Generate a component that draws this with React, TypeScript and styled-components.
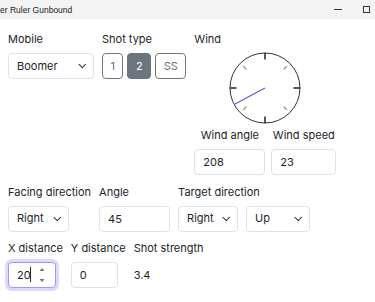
import React from "react";
import styled, { createGlobalStyle } from "styled-components";

const GlobalStyle = createGlobalStyle`
  html, body {
    margin: 0;
    padding: 0;
    background: #fff;
  }
  body {
    font-family: Inter, "Noto Sans", sans-serif;
    font-size: 11px;
    line-height: 16.5px;
    color: #212529;
  }
  * {
    box-sizing: border-box;
  }
`;

const Window = styled.div`
  width: 375px;
  height: 302px;
  overflow: hidden;
  background: #fff;
`;

const TitleBar = styled.div`
  height: 19px;
  background: #f3f3f3;
  display: flex;
  align-items: center;
`;

const Title = styled.span`
  flex: 1;
  font-family: "Liberation Sans", Arial, sans-serif;
  font-size: 8.5px;
  color: #1b1b1b;
  white-space: nowrap;
  padding-top: 1px;
`;

const WinControls = styled.div`
  display: flex;
  margin-right: -6px;
`;

const WinButton = styled.div`
  width: 29px;
  height: 19px;
  display: flex;
  align-items: center;
  justify-content: center;
`;

const MinGlyph = styled.span`
  width: 8px;
  height: 1px;
  background: #333;
`;

const MaxGlyph = styled.span`
  width: 7px;
  height: 7px;
  border: 1px solid #333;
`;

const Content = styled.div`
  padding: 12px 8px 0;
  display: flex;
  flex-direction: column;
  gap: 8.5px;
`;

const Row = styled.div`
  display: flex;
  align-items: flex-start;
  gap: ${(p: { $gap?: number }) => p.$gap ?? 8}px;
`;

const Field = styled.div<{ $center?: boolean }>`
  display: flex;
  flex-direction: column;
  align-items: ${(p) => (p.$center ? "center" : "flex-start")};
`;

const Label = styled.label`
  margin-bottom: 5.5px;
  white-space: nowrap;
`;

const SelectWrap = styled.div<{ $w: number }>`
  position: relative;
  width: ${(p) => p.$w}px;
  height: 26px;
`;

const NativeSelect = styled.select`
  appearance: none;
  width: 100%;
  height: 100%;
  padding: 0 22px 0 8px;
  border: 1px solid #dee2e6;
  border-radius: 4px;
  background: #fff;
  font: inherit;
  color: #212529;
  outline: none;
`;

const Chevron = styled.svg`
  position: absolute;
  right: 8px;
  top: 50%;
  transform: translateY(-50%);
  pointer-events: none;
`;

const InputWrap = styled.div`
  position: relative;
`;

const TextInput = styled.input<{ $w: number; $focused?: boolean }>`
  width: ${(p) => p.$w}px;
  height: 26px;
  padding: 0 8px;
  border: 1px solid ${(p) => (p.$focused ? "#9c9af4" : "#dee2e6")};
  border-radius: 4px;
  box-shadow: ${(p) => (p.$focused ? "0 0 0 3px rgba(112, 104, 246, 0.25)" : "none")};
  font: inherit;
  color: #212529;
  background: #fff;
  outline: none;
  caret-color: #212529;
`;

const Spinner = styled.svg`
  position: absolute;
  right: 11px;
  top: 5px;
  pointer-events: none;
`;

const Caret = styled.span`
  position: absolute;
  left: 22px;
  top: 5px;
  width: 1px;
  height: 15px;
  background: #212529;
`;

const ButtonGroup = styled.div`
  display: flex;
  gap: 4px;
`;

const ShotButton = styled.button<{ $active?: boolean }>`
  height: 26px;
  padding: 0 7.5px;
  border: 1px solid #6c757d;
  border-radius: 4px;
  background: ${(p) => (p.$active ? "#6c757d" : "#fff")};
  color: ${(p) => (p.$active ? "#fff" : "#6c757d")};
  font: inherit;
  cursor: pointer;
`;

const WindField = styled.div`
  display: flex;
  flex-direction: column;
  width: 142px;
`;

const DialBox = styled.div`
  display: flex;
  justify-content: center;
  margin-top: -1px;
  margin-bottom: 3px;
`;

const Value = styled.div`
  height: 26px;
  line-height: 26px;
`;

function Select({ value, options, width }: { value: string; options: string[]; width: number }) {
  return (
    <SelectWrap $w={width}>
      <NativeSelect defaultValue={value}>
        {options.map((o) => (
          <option key={o}>{o}</option>
        ))}
      </NativeSelect>
      <Chevron width="8.5" height="8.5" viewBox="0 0 16 16">
        <path d="m2 5 6 6 6-6" fill="none" stroke="#343a40" strokeWidth="2" strokeLinecap="round" strokeLinejoin="round" />
      </Chevron>
    </SelectWrap>
  );
}

function WindDial({ angle }: { angle: number }) {
  const c = 36;
  const r = 35;
  const rad = (angle * Math.PI) / 180;
  const ticks = [0, 45, 90, 135, 180, 225, 270, 315];
  return (
    <svg width="72" height="72" viewBox="0 0 72 72">
      <circle cx={c} cy={c} r={r} fill="none" stroke="#333" strokeWidth="1" />
      {ticks.map((t) => {
        const a = (t * Math.PI) / 180;
        const major = t % 90 === 0;
        const r1 = major ? 28.5 : 26.5;
        const r2 = major ? 35 : 31;
        return (
          <line
            key={t}
            x1={c + r1 * Math.cos(a)}
            y1={c - r1 * Math.sin(a)}
            x2={c + r2 * Math.cos(a)}
            y2={c - r2 * Math.sin(a)}
            stroke={major ? "#111" : "#8a8a8a"}
            strokeWidth={major ? 1.4 : 1.1}
          />
        );
      })}
      <line
        x1={c}
        y1={c}
        x2={c + 34 * Math.cos(rad)}
        y2={c - 34 * Math.sin(rad)}
        stroke="#6a5acd"
        strokeWidth="1.2"
      />
    </svg>
  );
}

export default function App() {
  const windAngle = 208;
  return (
    <Window>
      <GlobalStyle />
      <TitleBar>
        <Title>er Ruler Gunbound</Title>
        <WinControls>
          <WinButton>
            <MinGlyph />
          </WinButton>
          <WinButton>
            <MaxGlyph />
          </WinButton>
        </WinControls>
      </TitleBar>
      <Content>
        <Row>
          <Field>
            <Label>Mobile</Label>
            <Select value="Boomer" options={["Boomer", "Armor", "Mage", "Nak", "Trico"]} width={86} />
          </Field>
          <Field>
            <Label>Shot type</Label>
            <ButtonGroup>
              <ShotButton>1</ShotButton>
              <ShotButton $active>2</ShotButton>
              <ShotButton>SS</ShotButton>
            </ButtonGroup>
          </Field>
          <WindField>
            <Label>Wind</Label>
            <DialBox>
              <WindDial angle={windAngle} />
            </DialBox>
            <Row $gap={6}>
              <Field $center>
                <Label>Wind angle</Label>
                <TextInput $w={71} defaultValue={String(windAngle)} />
              </Field>
              <Field $center>
                <Label>Wind speed</Label>
                <TextInput $w={65} defaultValue="23" />
              </Field>
            </Row>
          </WindField>
        </Row>
        <Row>
          <Field>
            <Label>Facing direction</Label>
            <Select value="Right" options={["Right", "Left"]} width={61} />
          </Field>
          <Field>
            <Label>Angle</Label>
            <TextInput $w={71} defaultValue="45" />
          </Field>
          <Field>
            <Label>Target direction</Label>
            <Row>
              <Select value="Right" options={["Right", "Left"]} width={60} />
              <Select value="Up" options={["Up", "Down"]} width={64} />
            </Row>
          </Field>
        </Row>
        <Row>
          <Field>
            <Label>X distance</Label>
            <InputWrap>
              <TextInput $w={48} $focused defaultValue="20" />
              <Caret />
              <Spinner width="6" height="16" viewBox="0 0 6 16">
                <path d="M0.5 4 L3 1 L5.5 4 Z" fill="#777" />
                <path d="M0.5 12 L3 15 L5.5 12 Z" fill="#777" />
              </Spinner>
            </InputWrap>
          </Field>
          <Field>
            <Label>Y distance</Label>
            <TextInput $w={47} defaultValue="0" />
          </Field>
          <Field>
            <Label>Shot strength</Label>
            <Value>3.4</Value>
          </Field>
        </Row>
      </Content>
    </Window>
  );
}
